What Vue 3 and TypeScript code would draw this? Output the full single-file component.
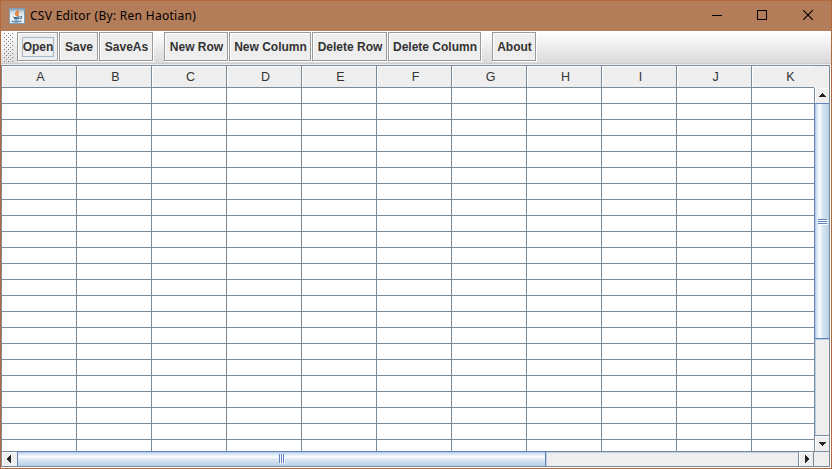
<script setup lang="ts">
interface ToolGroup {
  name: string
  items: string[]
}

const groups: ToolGroup[] = [
  { name: 'file', items: ['Open', 'Save', 'SaveAs'] },
  { name: 'edit', items: ['New Row', 'New Column', 'Delete Row', 'Delete Column'] },
  { name: 'help', items: ['About'] },
]
const columns: string[] = 'ABCDEFGHIJK'.split('')
const rowCount = 23
</script>

<template>
  <div class="window">
    <header class="titlebar">
      <svg class="logo" width="16" height="16" viewBox="0 0 16 16">
        <defs>
          <linearGradient id="logoBg" x1="0" y1="0" x2="0" y2="1">
            <stop offset="0" stop-color="#7f9fb5" />
            <stop offset="0.25" stop-color="#d3dee5" />
            <stop offset="0.6" stop-color="#f3f5f6" />
            <stop offset="1" stop-color="#e9edef" />
          </linearGradient>
        </defs>
        <rect x="0.5" y="0.5" width="15" height="15" fill="url(#logoBg)" stroke="#7f9cb0" />
        <path d="M8.700 1.500c1 2-3 2.800-2 4.700.3.700 1 1.200 1 1.800M10.300 4c-2.200 1-2.200 1.900-1.300 2.800.5.600.1 1-.4 1.300" fill="none" stroke="#e8701c" stroke-width="1.300" />
        <path d="M4.500 8.700c-1.300.8 5 .9 6.300.1M5 10.500h5.500M5.500 12h4M11.300 8.700c2.200-.4 1.800 1.700-.3 2.300M3.300 12.700c-1.600 1.500 7.500 1.700 9.200.1" fill="none" stroke="#3f6f93" stroke-width="1.100" />
      </svg>
      <span class="title">CSV Editor (By: Ren Haotian)</span>
      <div class="controls">
        <svg width="10" height="10" shape-rendering="crispEdges"><path d="M0 5h10v1H0z" /></svg>
        <svg width="10" height="10" shape-rendering="crispEdges"><rect x="0.5" y="0.5" width="9" height="9" fill="none" stroke="#000" /></svg>
        <svg class="close" width="10" height="10"><path d="M0 0l10 10M10 0L0 10" stroke="#000" stroke-width="1.100" /></svg>
      </div>
    </header>

    <nav class="toolbar">
      <svg class="grip" width="10" height="30" shape-rendering="crispEdges">
        <defs>
          <pattern id="bumps" width="4" height="4" patternUnits="userSpaceOnUse">
            <path d="M1 1h1v1H1zM3 3h1v1H3z" fill="#7d7d7d" />
            <path d="M2 2h1v1H2zM0 0h1v1H0z" fill="#fff" />
          </pattern>
        </defs>
        <rect width="10" height="30" fill="url(#bumps)" />
      </svg>
      <div v-for="g in groups" :key="g.name" class="group" :class="g.name">
        <button v-for="label in g.items" :key="label" class="tool" :class="{ focused: label === 'Open' }">
          <span>{{ label }}</span>
        </button>
      </div>
    </nav>

    <main class="pane">
      <div class="heads">
        <div v-for="c in columns" :key="c" class="head">{{ c }}</div>
      </div>
      <div class="middle">
        <div class="grid">
          <div v-for="r in rowCount" :key="r" class="row">
            <div v-for="c in columns" :key="c" class="cell"></div>
          </div>
        </div>
        <div class="vbar">
          <div class="arrow up">
            <svg width="9" height="5" shape-rendering="crispEdges"><path d="M4 0h1v1h1v1h1v1h1v1H1V3h1V2h1V1h1z" fill="#222" /></svg>
          </div>
          <div class="vthumb">
            <svg width="10" height="6" shape-rendering="crispEdges">
              <path d="M1 1.500h9M1 3.500h9M1 5.500h9" stroke="#fff" />
              <path d="M0 .5h9M0 2.500h9M0 4.500h9" stroke="#6382bf" />
            </svg>
          </div>
          <div class="vtrack"></div>
          <div class="arrow down">
            <svg width="9" height="5" shape-rendering="crispEdges"><path d="M1 0h7v1H7v1H6v1H5v1H4V3H3V2H2V1H1z" fill="#222" /></svg>
          </div>
        </div>
      </div>
      <div class="hbar">
        <div class="arrow left">
          <svg width="5" height="9" shape-rendering="crispEdges"><path d="M4 0v8H3V7H2V6H1V5H0V3h1V2h1V1h1V0z" fill="#222" /></svg>
        </div>
        <div class="hthumb">
          <svg width="6" height="10" shape-rendering="crispEdges">
            <path d="M1.500 1v9M3.500 1v9M5.500 1v9" stroke="#fff" />
            <path d="M.5 0v9M2.500 0v9M4.500 0v9" stroke="#6382bf" />
          </svg>
        </div>
        <div class="htrack"></div>
        <div class="arrow right">
          <svg width="5" height="9" shape-rendering="crispEdges"><path d="M0 0v8h1V7h1V6h1V5h1V3H3V2H2V1H1V0z" fill="#222" /></svg>
        </div>
        <div class="corner"></div>
      </div>
    </main>
  </div>
</template>

<style>
body {
  margin: 0;
  overflow: hidden;
}
</style>

<style scoped>
* {
  box-sizing: border-box;
}
svg {
  display: block;
}
.window {
  width: 832px;
  height: 469px;
  border: 1px solid #b0683c;
  background: #fff;
  display: flex;
  flex-direction: column;
  font-family: "Liberation Sans", Arial, sans-serif;
  color: #333;
}
.titlebar {
  height: 30px;
  flex: none;
  display: flex;
  align-items: center;
  padding: 0 17px 0 8px;
  background: #b47d5a;
}
.logo {
  margin-top: -1px;
}
.title {
  margin-left: 5px;
  font: 12px/16px "Noto Sans", sans-serif;
  letter-spacing: 0.29px;
  color: #000;
  white-space: nowrap;
}
.controls {
  margin-left: auto;
  margin-top: -2px;
  display: flex;
  gap: 35px;
  padding-right: 1px;
}
.close {
  margin-left: 1px;
}
.toolbar {
  height: 34px;
  flex: none;
  display: flex;
  padding: 1px 0 0 2px;
  background: linear-gradient(#fff, #dadada 32px, #ccc 32px, #ccc 33px, #eee 33px);
}
.grip {
  margin-right: 4px;
}
.group {
  display: grid;
  column-gap: 1px;
  height: 29px;
  margin-right: 11px;
}
.file {
  grid-template-columns: 41px 39px 54px;
}
.edit {
  grid-template-columns: 64px 82px 75px 93px;
}
.help {
  grid-template-columns: 44px;
}
.tool {
  border: 1px solid #999;
  padding: 0 0 0 1px;
  background: #eee;
  box-shadow: inset 1px 1px #fff, 1px 1px #fff;
  font: bold 12px/14px "Liberation Sans", Arial, sans-serif;
  color: #333;
  white-space: nowrap;
  display: flex;
  align-items: center;
  justify-content: center;
}
.tool span {
  border: 1px solid transparent;
  padding: 2px 0;
}
.focused span {
  border-color: #a3b8cc;
}
.pane {
  width: 829px;
  height: 402px;
  border: 1px solid #7a8a99;
  box-shadow: 1px 1px #fff;
  background: #eee;
}
.heads {
  height: 22px;
  width: 812px;
  display: flex;
  overflow: hidden;
}
.head {
  width: 75px;
  flex: none;
  border-right: 1px solid #7a8a99;
  border-bottom: 1px solid #7a8a99;
  box-shadow: inset 1px 1px #fff;
  text-align: center;
  font-size: 12.5px;
  line-height: 22px;
  padding-left: 3px;
}
.head:last-child {
  border-right-color: #eee;
}
.middle {
  display: flex;
  height: 363px;
}
.grid {
  width: 812px;
  flex: none;
  overflow: hidden;
  background: #fff;
}
.row {
  display: flex;
  height: 16px;
}
.cell {
  width: 75px;
  flex: none;
  border-right: 1px solid #7a8a99;
  border-bottom: 1px solid #7a8a99;
}
.vbar {
  width: 15px;
  display: flex;
  flex-direction: column;
  border-left: 1px solid #7a8a99;
}
.arrow {
  flex: none;
  display: flex;
  align-items: center;
  justify-content: center;
  box-shadow: inset 1px 1px #fff;
}
.up,
.down {
  height: 15px;
}
.down {
  height: 16px;
  border-top: 1px solid #7a8a99;
  padding-top: 2px;
}
.up svg,
.down svg {
  margin-left: 1px;
}
.vthumb {
  height: 236px;
  flex: none;
  margin-left: -1px;
  border: 1px solid #6382bf;
  border-right: 0;
  display: flex;
  align-items: center;
  justify-content: center;
  background: linear-gradient(90deg, #a3b8cc 0, #c8ddf2 1px, #fff 5px, #dce8f4 7px, #b8cfe5 14px);
}
.vthumb svg {
  margin-left: 2px;
  margin-top: 2px;
}
.vtrack {
  flex: 1;
  box-shadow: inset 1px 1px #b8cfe5;
}
.hbar {
  height: 15px;
  display: flex;
  border-top: 1px solid #7a8a99;
}
.left {
  width: 15px;
}
.hthumb {
  width: 529px;
  flex: none;
  margin-top: -1px;
  border: 1px solid #6382bf;
  border-bottom: 0;
  display: flex;
  align-items: center;
  justify-content: center;
  background: linear-gradient(#a3b8cc 0, #c8ddf2 1px, #fff 5px, #dce8f4 7px, #b8cfe5 14px);
}
.htrack {
  flex: 1;
  box-shadow: inset 1px 1px #b8cfe5;
}
.right {
  width: 15px;
  border-left: 1px solid #7a8a99;
  padding-left: 2px;
}
.corner {
  width: 16px;
  flex: none;
  border-left: 1px solid #7a8a99;
}
</style>
